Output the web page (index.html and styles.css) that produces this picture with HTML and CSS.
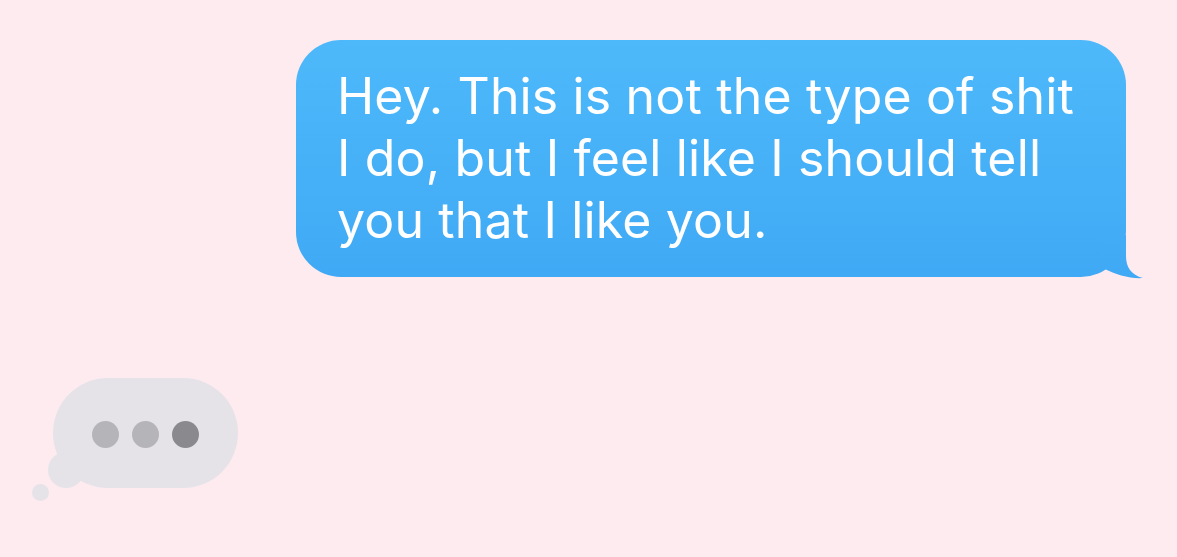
FILE: index.html
```html
<!DOCTYPE html>
<html lang="en">
<head>
  <meta charset="UTF-8" />
  <meta name="viewport" content="width=device-width, initial-scale=1.0"/>
  <title>Messages</title>
  <link rel="stylesheet" href="styles.css">
</head>
<body>

  <div class="thread">

    <div class="row row-sent">
      <div class="bubble">
        <p class="bubble-text">Hey. This is not the type of shit<br>I do, but I feel like I should tell<br>you that I like you.</p>
        <svg class="tail" width="70" height="45" viewBox="0 0 70 45">
          <defs>
            <linearGradient id="tailFill" gradientUnits="userSpaceOnUse" x1="0" y1="0" x2="0" y2="42">
              <stop offset="0" stop-color="#42acf6"/>
              <stop offset="1" stop-color="#40a9f5"/>
            </linearGradient>
          </defs>
          <path d="M50 0 L50 21 C50 32 55 40 67 43 C55 44 40 40 27 33 L18 0 Z" fill="url(#tailFill)"/>
        </svg>
      </div>
    </div>

    <!-- typing indicator -->
    <div class="row row-received">
      <div class="typing">
        <div class="typing-pill">
          <span class="dot"></span>
          <span class="dot"></span>
          <span class="dot dot-dark"></span>
        </div>
        <span class="puff puff-md"></span>
        <span class="puff puff-sm"></span>
      </div>
    </div>

  </div>

</body>
</html>
```

FILE: styles.css
```css
body {
  margin: 0;
  background: #fdebf0;
  font-family: Inter, "Liberation Sans", sans-serif;
}


.thread {
  display: flex;
  flex-direction: column;
  padding-top: 40px;
  padding-bottom: 40px;
}


.row {
  display: flex;
}

.row-sent {
  justify-content: flex-end;
  padding-right: 51px;
}

.row-received {
  margin-top: 101px;
  padding-left: 53px;
}


.bubble {
  position: relative;
  width: 830px;
  box-sizing: border-box;
  padding: 25px 20px 26px 41px;
  border-radius: 45px;
  background: linear-gradient(to bottom, #4db9fa, #40a9f5);
}

.bubble-text {
  margin: 0;
  color: #fff;
  font-size: 50px;
  letter-spacing: 0.15px;
  line-height: 62px;
  white-space: nowrap;
}

.tail {
  position: absolute;
  right: -20px;
  bottom: -3px;
}


.typing {
  position: relative;
}

.typing-pill {
  display: flex;
  align-items: center;
  justify-content: center;
  gap: 13px;
  width: 185px;
  height: 110px;
  padding-top: 3px;
  box-sizing: border-box;
  border-radius: 55px;
  background: #e5e3e8;
}

.dot {
  width: 27px;
  height: 27px;
  border-radius: 50%;
  background: #b5b4b9;
}

.dot-dark {
  background: #8a898e;
}

.puff {
  position: absolute;
  border-radius: 50%;
  background: #e5e3e8;
}

.puff-md {
  left: -5px;
  top: 74px;
  width: 36px;
  height: 36px;
}

.puff-sm {
  left: -21px;
  top: 106px;
  width: 17px;
  height: 17px;
}
```
